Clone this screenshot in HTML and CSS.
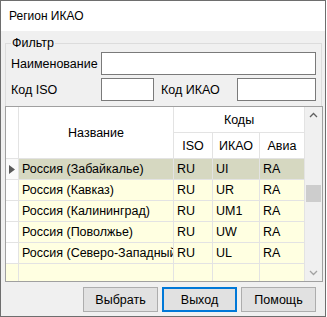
FILE: index.html
```html
<!doctype html>
<html>
<head>
<meta charset="utf-8">
<title>Регион ИКАО</title>
<link rel="stylesheet" href="styles.css">
</head>
<body>
<div class="window">
  <div class="titlebar">Регион ИКАО</div>
  <div class="client">
    <div class="group">
      <span class="legend">Фильтр</span>
      <div class="row first">
        <label class="lbl">Наименование</label>
        <div class="edit e-name"></div>
      </div>
      <div class="row">
        <label class="lbl">Код ISO</label>
        <div class="edit e-iso"></div>
        <label class="lbl lbl2">Код ИКАО</label>
        <div class="edit e-icao"></div>
      </div>
    </div>

    <div class="gridbox">
      <div class="grid">
        <div class="hc rh-head"></div>
        <div class="hc name-head">Название</div>
        <div class="hc codes-head">Коды</div>
        <div class="hc">ISO</div>
        <div class="hc">ИКАО</div>
        <div class="hc">Авиа</div>

        <div class="rh sel-rh"><svg width="6" height="9" viewBox="0 0 6 9"><polygon points="0,0 6,4.5 0,9" fill="#5a5a5a"/></svg></div>
        <div class="c sel">Россия (Забайкалье)</div><div class="c sel">RU</div><div class="c sel">UI</div><div class="c sel">RA</div>

        <div class="rh"></div>
        <div class="c">Россия (Кавказ)</div><div class="c">RU</div><div class="c">UR</div><div class="c">RA</div>

        <div class="rh"></div>
        <div class="c">Россия (Калининград)</div><div class="c">RU</div><div class="c">UM1</div><div class="c">RA</div>

        <div class="rh"></div>
        <div class="c">Россия (Поволжье)</div><div class="c">RU</div><div class="c">UW</div><div class="c">RA</div>

        <div class="rh"></div>
        <div class="c">Россия (Северо-Западный)</div><div class="c">RU</div><div class="c">UL</div><div class="c">RA</div>

        <div class="c empty"></div><div class="c empty"></div><div class="c empty"></div><div class="c empty"></div><div class="c empty"></div>
      </div>
      <div class="vscroll">
        <svg class="arr" width="17" height="17" viewBox="0 0 17 17"><polyline points="5,10 8.5,6.5 12,10" fill="none" stroke="#606060" stroke-width="1.3"/></svg>
        <div class="track"><div class="thumb"></div></div>
        <svg class="arr" width="17" height="17" viewBox="0 0 17 17"><polyline points="5,7 8.5,10.5 12,7" fill="none" stroke="#a3a3a3" stroke-width="1.3"/></svg>
      </div>
    </div>

    <div class="buttons">
      <div class="btn">Выбрать</div>
      <div class="btn focus">Выход</div>
      <div class="btn">Помощь</div>
    </div>
  </div>
</div>
</body>
</html>
```

FILE: styles.css
```css
*{margin:0; padding:0; box-sizing:border-box;}
body{background:#fff; font-family:"Liberation Sans", Arial, sans-serif; font-size:12.5px; color:#000;}
.window{width:326px; height:317px; border:1px solid #6e6e6e; display:flex; flex-direction:column;}
.titlebar{height:30px; line-height:30px; padding-left:8px; background:#fff; flex:none; font-size:12px;}
.client{flex:1; background:#f0f0f0; display:flex; flex-direction:column;}

.group{margin:12px 3px 0 4px; border:1px solid #dcdcdc; border-bottom:none; padding:0 5px 5px 5px;}
.legend{display:block; width:max-content; margin-top:-8px; padding:0 1px; line-height:14px; background:#f0f0f0;}
.row{display:flex; align-items:center; height:23px; margin-top:3px;}
.row.first{margin-top:2px;}
.lbl{width:90px; flex:none;}
.lbl2{width:76px; margin-left:7px;}
.edit{height:23px; background:#fff; border:1px solid #7a7a7a; flex:none;}
.e-name{width:215px;}
.e-iso{width:53px;}
.e-icao{width:79px;}

.gridbox{margin:0 2px 0 4px; height:176px; border:1px solid #a0a0a0; display:flex; overflow:hidden;}
.grid{display:grid; grid-template-columns:12px 154px 38px 46px 44px; grid-template-rows:25px 25px 20px 20px 20px 20px 20px 17px; gap:1px; background:#e3e3e3; border-right:1px solid #e3e3e3; align-content:start; width:299px; flex:none; height:174px; overflow:hidden;}
.hc{background:#fff; display:flex; align-items:center; justify-content:center;}
.rh-head{grid-row:span 2;}
.name-head{grid-row:span 2;}
.codes-head{grid-column:span 3;}
.rh{background:#fff; display:flex; align-items:center; padding-left:3px;}
.c{background:#ffffe1; display:flex; align-items:center; padding-left:3px; white-space:nowrap; overflow:hidden;}
.c.sel{background:#d6d8c1;}
.sel-rh{background:#fafafa;}

.vscroll{width:17px; flex:none; background:#f0f0f0; display:flex; flex-direction:column;}
.arr{display:block; flex:none;}
.track{flex:1; padding:61px 1px 0 1px;}
.thumb{height:17px; background:#cdcdcd;}

.buttons{display:flex; justify-content:flex-end; gap:4px; margin:5px 9px 0 0;}
.btn{width:75px; height:25px; background:#e1e1e1; border:1px solid #adadad; display:flex; align-items:center; justify-content:center;}
.btn.focus{border:2px solid #0078d7;}
```
